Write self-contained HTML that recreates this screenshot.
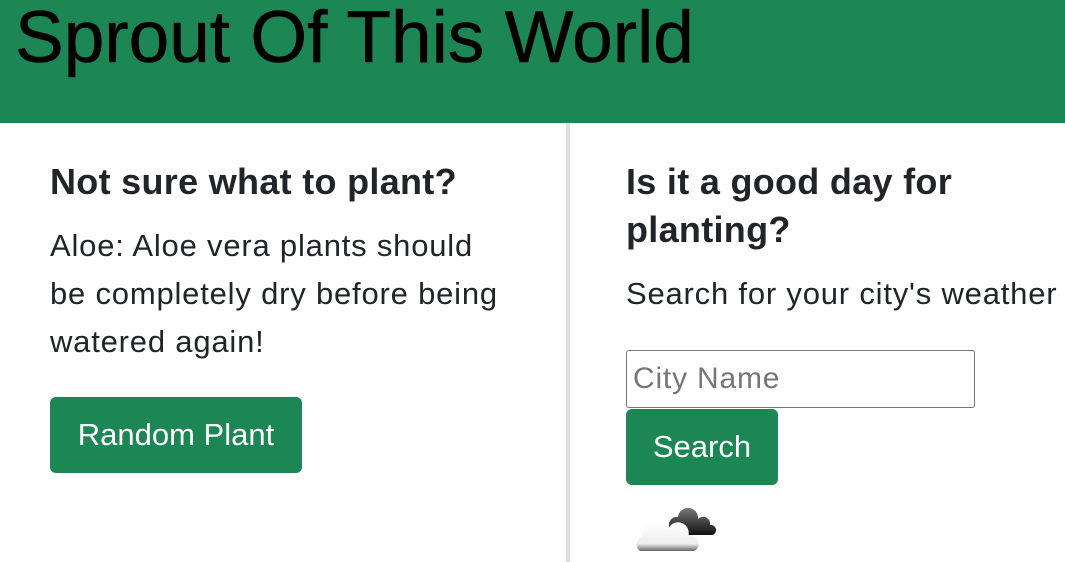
<!DOCTYPE html>
<html><head><style>
body{margin:0;width:1065px;height:562px;overflow:hidden;background:#fff;font-family:"Liberation Sans",Arial,sans-serif;color:#212529;position:relative}
.hdr{position:absolute;left:0;top:0;width:1065px;height:123px;background:#1c8754}
.hdr h1{position:absolute;left:15px;top:-4px;margin:0;font-size:73px;font-weight:400;color:#000;-webkit-text-stroke:0.6px #000}
.div{position:absolute;left:566px;top:123px;width:4px;height:439px;background:#dedede;border-radius:4px 4px 0 0}
.t{position:absolute;margin:0;white-space:nowrap}
h2.t{font-size:36px;font-weight:700;line-height:48px;letter-spacing:0.3px}
p.t{font-size:31px;line-height:48px;letter-spacing:0.8px}
.btn{position:absolute;background:#1c8754;color:#fff;border-radius:6px;font-size:31px;display:flex;align-items:center;justify-content:center}
.inp{position:absolute;left:626px;top:350px;border:1.5px solid #767676;border-radius:3px;font-size:30px;letter-spacing:0.8px;color:#767676;line-height:56px;padding-left:6px;box-sizing:border-box;width:349px;height:58px}
</style></head><body>
<div class="hdr"><h1>Sprout Of This World</h1></div>
<div class="div"></div>
<h2 class="t" style="left:50px;top:158px">Not sure what to plant?</h2>
<p class="t" style="left:50px;top:222px">Aloe: Aloe vera plants should<br>be completely dry before being<br>watered again!</p>
<div class="btn" style="left:50px;top:397px;width:252px;height:76px">Random Plant</div>
<h2 class="t" style="left:626px;top:158px">Is it a good day for<br>planting?</h2>
<p class="t" style="left:626px;top:270px">Search for your city's weather</p>
<div class="inp">City Name</div>
<div class="btn" style="left:626px;top:409px;width:152px;height:76px">Search</div>
<svg style="position:absolute;left:634px;top:505px" width="90" height="50" viewBox="0 0 90 50">
<defs><linearGradient id="g" x1="0" y1="0" x2="0" y2="1"><stop offset="0" stop-color="#fff"/><stop offset=".75" stop-color="#eee"/><stop offset="1" stop-color="#666"/></linearGradient>
<linearGradient id="d" x1="0" y1="0" x2="0" y2="1"><stop offset="0" stop-color="#777"/><stop offset="1" stop-color="#111"/></linearGradient></defs>
<path d="M36 24 a8 8 0 0 1 8-12 a10 10 0 0 1 20 2 a7 7 0 0 1 12 6 a5 5 0 0 1 2 10 h-36z" fill="url(#d)"/>
<path d="M6 46 a8 8 0 0 1 2-14 a14 14 0 0 1 26-8 a10 10 0 0 1 20 8 a7 7 0 0 1 6 14z" fill="url(#g)"/>
</svg>
</body></html>
